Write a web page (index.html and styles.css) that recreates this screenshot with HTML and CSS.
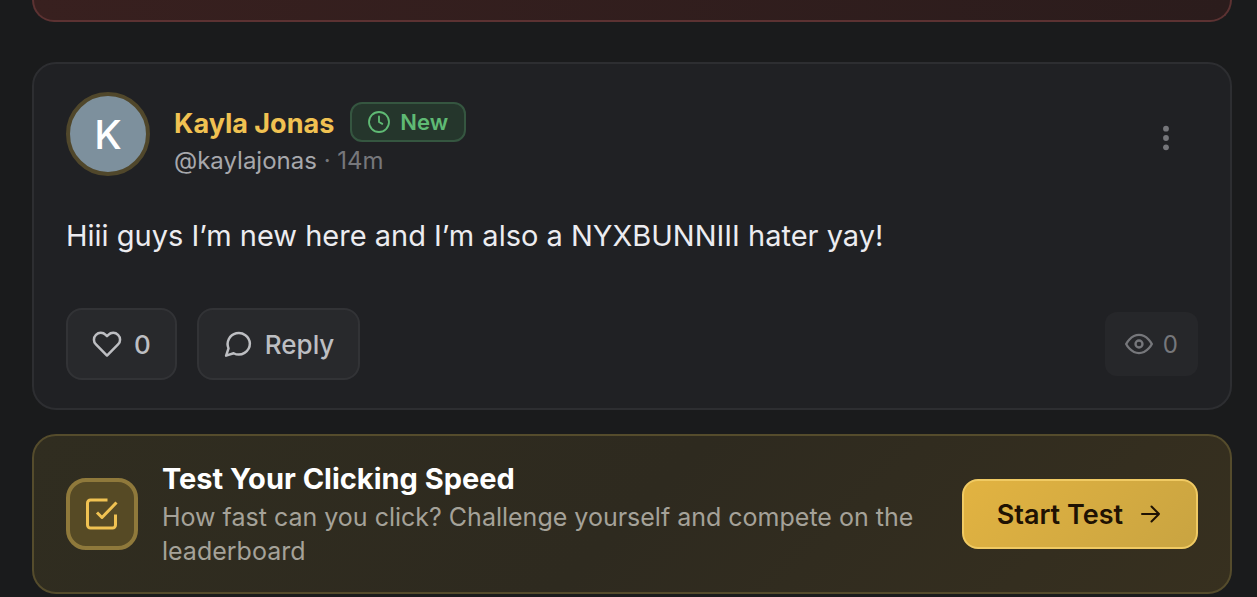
FILE: index.html
```html
<!DOCTYPE html>
<html lang="en">
<head>
<meta charset="utf-8">
<meta name="viewport" content="width=device-width, initial-scale=1">
<title>Feed</title>
<link rel="stylesheet" href="styles.css">
</head>
<body>
<main class="feed">
  <div class="notice"></div>

  <article class="card post">
    <header class="post-header">
      <div class="avatar">K</div>
      <div class="author">
        <div class="author-row">
          <a class="author-name" href="#">Kayla Jonas</a>
          <span class="badge">
            <svg class="badge-icon" viewBox="0 0 24 24" aria-hidden="true"><circle cx="12" cy="12" r="10.9"/><path d="M12 6v6l3.6 2"/></svg>
            New
          </span>
        </div>
        <div class="meta"><span class="handle">@kaylajonas</span> · <time>14m</time></div>
      </div>
      <button class="menu" type="button" aria-label="More options">
        <svg class="menu-icon" viewBox="0 0 28 28" aria-hidden="true"><circle cx="14" cy="4.700" r="2.900"/><circle cx="14" cy="14" r="2.900"/><circle cx="14" cy="23.300" r="2.900"/></svg>
      </button>
    </header>
    <p class="message">Hiii guys I’m new here and I’m also a NYXBUNNIII hater yay!</p>
    <footer class="actions">
      <button class="action" type="button" aria-label="Like, 0 likes">
        <svg class="icon" viewBox="0 0 24 24" aria-hidden="true"><path d="M20.84 4.61a5.5 5.5 0 0 0-7.78 0L12 5.67l-1.06-1.06a5.5 5.5 0 0 0-7.78 7.78L12 21.23l8.84-8.84a5.5 5.5 0 0 0 0-7.78z"/></svg>
        <span>0</span>
      </button>
      <button class="action" type="button">
        <svg class="icon" viewBox="0 0 24 24" aria-hidden="true"><path d="M21.5 11.5a8.9 8.9 0 0 1-13 7.9L2.5 21.3l1.900-5.800a8.9 8.9 0 1 1 17.100-4z"/></svg>
        <span>Reply</span>
      </button>
      <div class="views">
        <svg class="views-icon" viewBox="0 0 24 24" aria-hidden="true"><path d="M1 12S4.800 4.200 12 4.200 23 12 23 12 19.200 19.800 12 19.800 1 12 1 12z"/><circle cx="12" cy="12" r="3"/></svg>
        <span>0</span>
      </div>
    </footer>
  </article>

  <section class="card promo">
    <div class="promo-icon">
      <svg class="check-icon" viewBox="0 0 36 36" aria-hidden="true"><path d="M23.500 4H6.500a3 3 0 0 0-3 3v22a3 3 0 0 0 3 3h22a3 3 0 0 0 3-3V18.500"/><path d="M13 16.500l5 5L32.500 6.500"/></svg>
    </div>
    <div class="promo-text">
      <h2 class="promo-title">Test Your Clicking Speed</h2>
      <p class="promo-desc">How fast can you click? Challenge yourself and compete on the leaderboard</p>
    </div>
    <button class="start" type="button">
      Start Test
      <svg class="arrow" viewBox="0 0 24 24" aria-hidden="true"><path d="M3 12h17M12.500 4.500 20 12l-7.500 7.500"/></svg>
    </button>
  </section>
</main>
</body>
</html>
```
FILE: styles.css
```css
* {
  box-sizing: border-box;
}

body {
  margin: 0;
  background: #1a1b1c;
  color: #ececf0;
  font-family: Inter, "Liberation Sans", sans-serif;
}

button {
  font: inherit;
  cursor: pointer;
}

svg {
  display: block;
  flex: none;
  fill: none;
  stroke: currentColor;
  stroke-linecap: round;
  stroke-linejoin: round;
}

.feed {
  padding: 0 25px 0 32px;
}

.notice {
  height: 22px;
  margin-bottom: 40px;
  border: 2px solid #5c3232;
  border-top: 0;
  border-radius: 0 0 24px 24px;
  background: linear-gradient(90deg, #38201f, #2b1c1c);
}

.card {
  border: 2px solid #2d2e31;
  border-radius: 24px;
}

.post {
  margin-bottom: 24px;
  padding: 28px 32px;
  background: #202124;
}

.post-header {
  display: flex;
  align-items: flex-start;
  gap: 24px;
  min-height: 92px;
}

.avatar {
  display: grid;
  place-items: center;
  flex: none;
  width: 84px;
  height: 84px;
  border: 4px solid #50472b;
  border-radius: 50%;
  background: #7d909d;
  color: #fff;
  font-size: 40px;
  font-weight: 500;
}

.author {
  flex: 1;
  padding-top: 9px;
}

.author-row {
  display: flex;
  align-items: center;
  gap: 16px;
}

.author-name {
  padding-top: 5px;
  color: #f0c252;
  font-size: 27px;
  font-weight: 700;
  line-height: 36px;
  text-decoration: none;
}

.badge {
  display: flex;
  align-items: center;
  gap: 10px;
  height: 40px;
  padding: 0 16px;
  border: 2px solid #355640;
  border-radius: 12px;
  background: #25362c;
  color: #5fba74;
  font-size: 22px;
  font-weight: 600;
}

.badge-icon {
  width: 22px;
  height: 22px;
  stroke-width: 2;
  overflow: visible;
}

.meta {
  padding-top: 2px;
  color: #76777b;
  font-size: 24px;
  line-height: 34px;
}

.handle {
  color: #a7a8ac;
}

.menu {
  display: grid;
  place-items: center;
  align-self: center;
  width: 64px;
  height: 64px;
  padding: 0;
  border: 0;
  background: transparent;
  color: #75767a;
}

.menu-icon {
  width: 28px;
  height: 28px;
  fill: currentColor;
  stroke: none;
}

.message {
  margin: 28px 0 48px;
  font-size: 29px;
  line-height: 48px;
}

.actions {
  display: flex;
  align-items: center;
  gap: 20px;
}

.action {
  display: flex;
  align-items: center;
  gap: 12px;
  height: 72px;
  padding: 0 24px;
  border: 2px solid #323336;
  border-radius: 16px;
  background: #28292c;
  color: #bdbec2;
  font-size: 26px;
  font-weight: 500;
}

.icon {
  width: 30px;
  height: 30px;
  stroke-width: 2;
}

.views {
  display: flex;
  align-items: center;
  gap: 10px;
  height: 64px;
  margin-left: auto;
  padding: 0 20px;
  border-radius: 12px;
  background: #26272a;
  color: #76777b;
  font-size: 24px;
}

.views-icon {
  width: 28px;
  height: 28px;
  stroke-width: 2;
}

.promo {
  display: flex;
  align-items: center;
  gap: 24px;
  padding: 24px 32px;
  border-color: #554c2c;
  background: linear-gradient(135deg, #302d20, #2e2a1f 50%, #37301f);
}

.promo-icon {
  display: grid;
  place-items: center;
  flex: none;
  width: 72px;
  height: 72px;
  border: 4px solid #8f793b;
  border-radius: 20px;
  background: #564a25;
  color: #f0c252;
}

.check-icon {
  width: 36px;
  height: 36px;
  stroke-width: 3;
  stroke-linecap: butt;
}

.promo-text {
  flex: 1;
}

.promo-title {
  margin: 0 0 2px;
  color: #fff;
  font-size: 29px;
  font-weight: 700;
  line-height: 38px;
}

.promo-desc {
  margin: 0;
  color: #a5a299;
  font-size: 25px;
  line-height: 34px;
}

.start {
  display: flex;
  align-items: center;
  gap: 16px;
  flex: none;
  height: 70px;
  padding: 0 33px;
  border: 2px solid #f0ca63;
  border-radius: 16px;
  background: linear-gradient(135deg, #e2b341, #c9a441);
  color: #1f1203;
  font-size: 27px;
  font-weight: 600;
}

.arrow {
  width: 24px;
  height: 24px;
  stroke-width: 2;
}
```
